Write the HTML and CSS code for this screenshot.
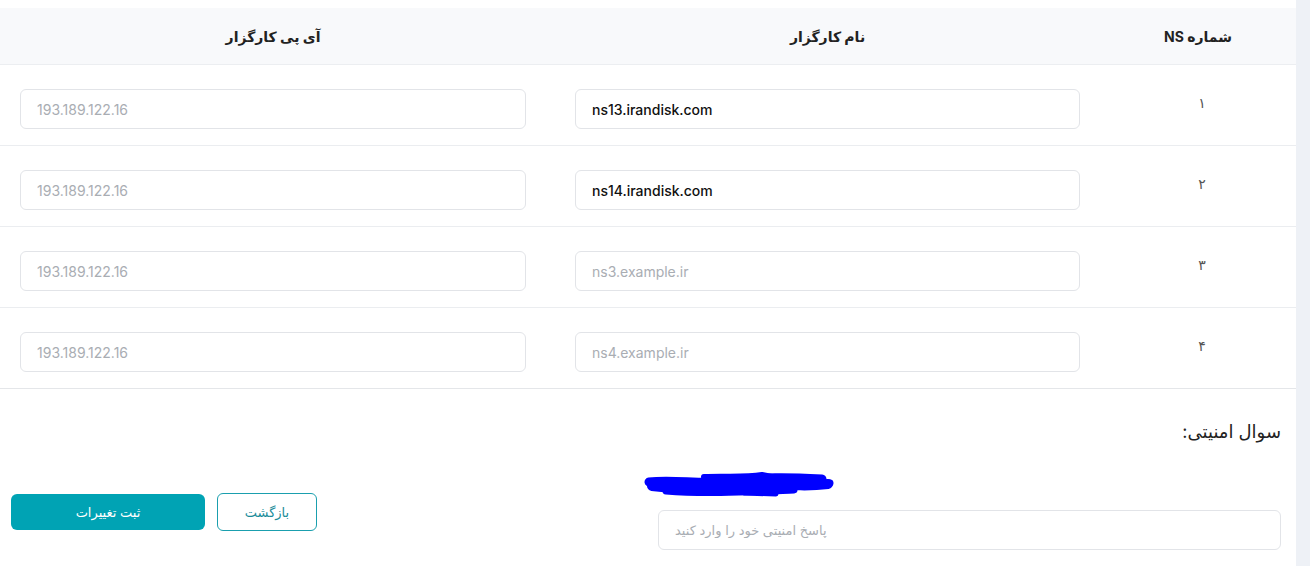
FILE: index.html
```html
<!doctype html>
<html lang="fa" dir="rtl">
<head>
<meta charset="UTF-8">
<title>تنظیمات NS</title>
<link rel="stylesheet" href="styles.css">
</head>
<body>
<div class="page">
<div class="card">
	<div class="ns-table">
		<div class="ns-head">
			<div class="th th-num">شماره NS</div>
			<div class="th th-name">نام کارگزار</div>
			<div class="th th-ip">آی پی کارگزار</div>
		</div>
		<div class="ns-row">
			<div class="td td-num">۱</div>
			<div class="td td-name"><input class="field" type="text" value="ns13.irandisk.com"></div>
			<div class="td td-ip"><input class="field" type="text" placeholder="193.189.122.16"></div>
		</div>
		<div class="ns-row">
			<div class="td td-num">۲</div>
			<div class="td td-name"><input class="field" type="text" value="ns14.irandisk.com"></div>
			<div class="td td-ip"><input class="field" type="text" placeholder="193.189.122.16"></div>
		</div>
		<div class="ns-row">
			<div class="td td-num">۳</div>
			<div class="td td-name"><input class="field" type="text" placeholder="ns3.example.ir"></div>
			<div class="td td-ip"><input class="field" type="text" placeholder="193.189.122.16"></div>
		</div>
		<div class="ns-row">
			<div class="td td-num">۴</div>
			<div class="td td-name"><input class="field" type="text" placeholder="ns4.example.ir"></div>
			<div class="td td-ip"><input class="field" type="text" placeholder="193.189.122.16"></div>
		</div>
	</div>

	<div class="footer">
		<div class="security">
			<div class="security-label">سوال امنیتی:</div>
			<div class="security-question">
				<svg width="190" height="28" viewBox="0 0 190 28">
					<g fill="none" stroke="#0000ff" stroke-linecap="round" stroke-linejoin="round">
						<path d="M5 12 C30 9 60 15 90 11 S140 7 178 9" stroke-width="9"/>
						<path d="M8 16 C40 20 80 18 120 16 S160 17 184 14" stroke-width="10"/>
						<path d="M22 21 C60 24 100 22 150 20" stroke-width="7"/>
						<path d="M60 7 C80 6 100 8 118 5 L128 7" stroke-width="6"/>
						<path d="M140 13 C155 12 170 15 186 13" stroke-width="7"/>
						<path d="M100 23 L132 24" stroke-width="5"/>
					</g>
				</svg>
			</div>
			<input class="field answer" type="text" placeholder="پاسخ امنیتی خود را وارد کنید">
		</div>
		<div class="actions">
			<button class="btn btn-outline" type="button">بازگشت</button>
			<button class="btn btn-primary" type="submit">ثبت تغییرات</button>
		</div>
	</div>
</div>
<div class="side-strip"></div>
</div>
</body>
</html>
```

FILE: styles.css
```css
*{box-sizing:border-box;}
body{margin:0;background:#fff;font-family:Inter,"DejaVu Sans",sans-serif;color:#222;}
.page{display:flex;direction:ltr;height:566px;overflow:hidden;}
.card{width:1296px;flex:none;direction:rtl;padding-top:8px;background:#fff;}
.side-strip{flex:1;background:#eef1f6;}

.ns-head,.ns-row{display:grid;grid-template-columns:196px 550px 550px;}
.ns-head{height:57px;background:#f8f9fb;border-bottom:1px solid #eceef1;}
.ns-row{height:81px;border-bottom:1px solid #ebedf0;}
.ns-row:last-child{border-bottom-color:#e4e6e9;}

.th{display:flex;align-items:center;justify-content:center;font-size:14px;font-weight:700;color:#222;}
.th-name{padding:0 20px 0 25px;}
.th-ip{padding:0 24px 0 20px;}

.td{padding-top:24px;}
.td-num{padding-top:28px;text-align:center;font-size:14px;line-height:20px;color:#555;padding-left:8px;}
.td-name{padding-right:20px;padding-left:25px;}
.td-ip{padding-right:24px;padding-left:20px;}

.field{display:block;width:100%;height:40px;border:1px solid #e2e4e8;border-radius:6px;background:#fff;padding:0 16px;font-family:Inter,"DejaVu Sans",sans-serif;font-size:14px;font-weight:500;color:#111;direction:ltr;text-align:left;outline:none;}
.field::placeholder{color:#a9adb3;font-weight:400;}

.footer{display:flex;justify-content:space-between;padding:0 15px 0 11px;}
.security{width:623px;padding-top:30px;}
.security-label{font-size:18px;line-height:26px;color:#222;}
.security-question{direction:ltr;height:65px;margin-left:-14px;padding-top:25px;}
.security-question svg{display:block;}
.answer{font-size:13px;}

.actions{display:flex;align-items:center;gap:12px;margin-top:104px;align-self:flex-start;}
.btn{font-family:Inter,"DejaVu Sans",sans-serif;font-size:13px;border-radius:6px;cursor:pointer;}
.btn-outline{width:100px;height:38px;background:#fff;border:1px solid #1a9fae;color:#1a8c99;}
.btn-primary{width:194px;height:36px;background:#00a3b4;border:0;color:#fff;}
```
